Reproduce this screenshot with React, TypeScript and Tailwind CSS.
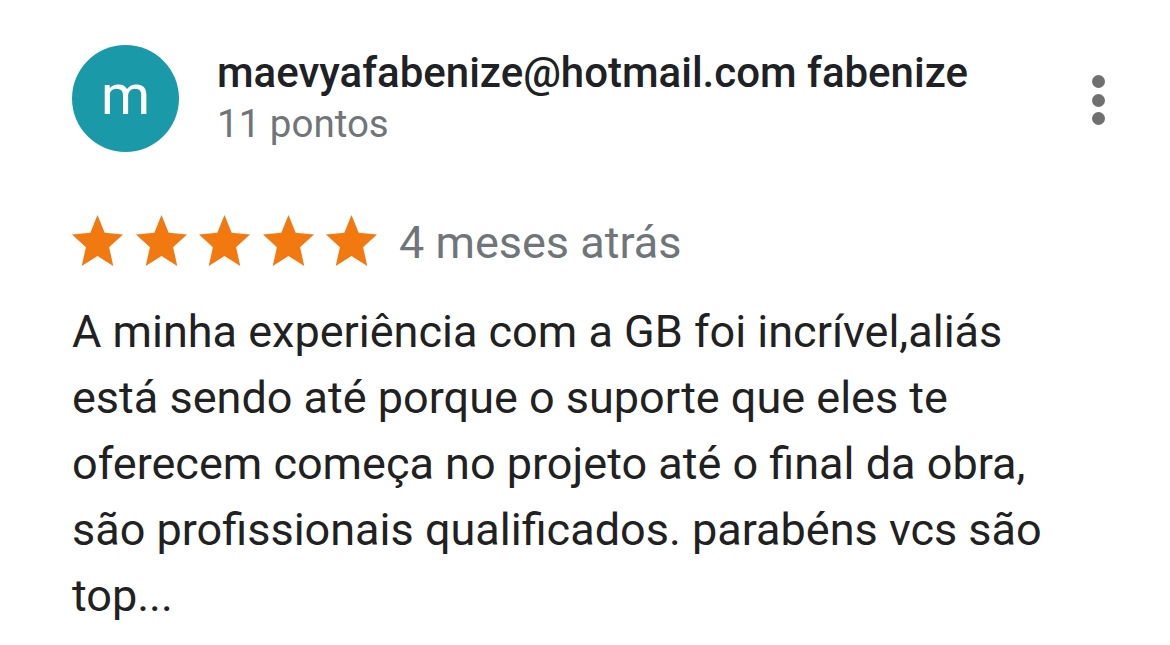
import React from "react";

function Star() {
  return (
    <svg viewBox="2 2 20 19" preserveAspectRatio="none" className="h-[51px] w-[51px]" fill="#f2790f">
      <path d="M12 17.27L18.18 21l-1.64-7.03L22 9.24l-7.19-.61L12 2 9.19 8.63 2 9.24l5.46 4.73L5.82 21z" />
    </svg>
  );
}

const lines = [
  "A minha experiência com a GB foi incrível,aliás",
  "está sendo até porque o suporte que eles te",
  "oferecem começa no projeto até o final da obra,",
  "são profissionais qualificados. parabéns vcs são",
  "top...",
];

export default function App() {
  return (
    <div className="h-[645px] w-[1170px] overflow-hidden bg-white font-['Roboto',sans-serif]">
      <div className="flex items-start pl-[72px] pr-[65px] pt-[45px]">
        <div className="flex h-[107px] w-[107px] shrink-0 items-center justify-center rounded-full bg-[#1a9aa8] pb-[8px] text-[56px] leading-none text-white">
          m
        </div>
        <div className="ml-[38px] flex-1 pt-[1px]">
          <div className="text-[42px] font-medium leading-[53px] text-[#202124]">maevyafabenize@hotmail.com fabenize</div>
          <div className="text-[38.5px] leading-[50px] text-[#70757a]">11 pontos</div>
        </div>
        <div className="mt-[30px] flex flex-col gap-[5.5px]">
          <span className="h-[13px] w-[13px] rounded-full bg-[#707070]" />
          <span className="h-[13px] w-[13px] rounded-full bg-[#707070]" />
          <span className="h-[13px] w-[13px] rounded-full bg-[#707070]" />
        </div>
      </div>
      <div className="mt-[63px] flex items-start pl-[72px]">
        <div className="flex gap-[12.5px]">
          <Star />
          <Star />
          <Star />
          <Star />
          <Star />
        </div>
        <span className="ml-[22px] mt-[2px] text-[45px] leading-[51px] text-[#70757a]">4 meses atrás</span>
      </div>
      <div className="mt-[31px] pl-[72px] text-[45px] leading-[66px] text-[#212121]">
        {lines.map((line) => (
          <p key={line} className="whitespace-nowrap">
            {line}
          </p>
        ))}
      </div>
    </div>
  );
}
